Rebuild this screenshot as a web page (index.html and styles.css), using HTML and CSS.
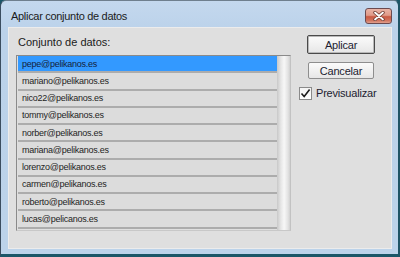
FILE: index.html
```html
<!DOCTYPE html>
<html lang="es">
<head>
  <meta charset="UTF-8">
  <title>Aplicar conjunto de datos</title>
  <link rel="stylesheet" href="styles.css">
</head>
<body>
  <div class="window">
    <!-- Title bar -->
    <div class="titlebar">
      <span class="title">Aplicar conjunto de datos</span>
      <button class="close" aria-label="Cerrar">
        <svg width="12" height="10" viewBox="0 0 12 10">
          <path d="M2 1.5 L10 8.5 M10 1.5 L2 8.5" stroke="#6a3a30" stroke-width="3.4" stroke-linecap="round"/>
          <path d="M2 1.5 L10 8.5 M10 1.5 L2 8.5" stroke="#ffffff" stroke-width="1.8" stroke-linecap="round"/>
        </svg>
      </button>
    </div>

    <!-- Dialog body -->
    <div class="content">
      <div class="left">
        <div class="label">Conjunto de datos:</div>
        <div class="list">
          <div class="rows">
            <div class="row selected">pepe@pelikanos.es</div>
            <div class="row">mariano@pelikanos.es</div>
            <div class="row">nico22@pelikanos.es</div>
            <div class="row">tommy@pelikanos.es</div>
            <div class="row">norber@pelikanos.es</div>
            <div class="row">mariana@pelikanos.es</div>
            <div class="row">lorenzo@pelikanos.es</div>
            <div class="row">carmen@pelikanos.es</div>
            <div class="row">roberto@pelikanos.es</div>
            <div class="row">lucas@pelicanos.es</div>
          </div>
          <div class="scrollbar"></div>
        </div>
      </div>

      <div class="right">
        <button class="btn default">Aplicar</button>
        <button class="btn">Cancelar</button>
        <label class="check">
          <span class="box">
            <svg width="11" height="11" viewBox="0 0 11 11">
              <path d="M1.5 5.5 L4.2 8.6 L9.6 1.6" fill="none" stroke="#1c1c1c" stroke-width="1.6"/>
            </svg>
          </span>
          Previsualizar
        </label>
      </div>
    </div>
  </div>
</body>
</html>
```

FILE: styles.css
```css
/* Basic page */
body {
  margin: 0;
  background: #1b5668;
  font-family: "Liberation Sans", Arial, sans-serif;
}

/* Window frame */
.window {
  width: 400px;
  height: 257px;
  box-sizing: border-box;
  border-style: solid;
  border-width: 1px 2px 3px 1px;
  border-color: #6f7f8e #1f5466 #1b5668 #3b4d5f;
  border-radius: 6px 6px 0 0;
  background: linear-gradient(#c4d8ee, #bbd2ea 30px, #bcd3ea);
  padding: 0 6px 5px 7px;
  display: flex;
  flex-direction: column;
}

/* Title bar */
.titlebar {
  height: 26px;
  flex-shrink: 0;
  display: flex;
  justify-content: space-between;
  align-items: flex-start;
  padding-left: 3px;
}
.title {
  margin-top: 9px;
  font-size: 11px;
  line-height: 13px;
  letter-spacing: -0.3px;
  color: #1b1b1b;
}
.close {
  margin-top: 7px;
  width: 27px;
  height: 16px;
  padding: 0;
  border: 1px solid #6b4a4f;
  border-radius: 3px;
  background: linear-gradient(#eab4a6, #e09a88 45%, #c95a43 55%, #d0705a 80%, #e0a08e);
  display: flex;
  align-items: center;
  justify-content: center;
}

/* Dialog body */
.content {
  flex: 1;
  background: #dfdfdf;
  border: 1px solid #ececec;
  display: flex;
  gap: 8px;
  padding: 7px 16px 0 7px;
}
.left {
  display: flex;
  flex-direction: column;
}
.label {
  margin: 1px 0 6px 2px;
  font-size: 11px;
  line-height: 13px;
  color: #202020;
}

/* List box */
.list {
  width: 275px;
  height: 176px;
  box-sizing: border-box;
  border: 1px solid;
  border-color: #8a8a8a #c2c2c2 #c8c8c8 #8a8a8a;
  display: flex;
}
.rows {
  flex: 1;
  padding-left: 1px;
}
.row {
  height: 17.25px;
  box-sizing: border-box;
  border-bottom: 2px solid #acacac;
  background: #dcdcdc;
  padding-left: 4px;
  display: flex;
  align-items: center;
  font-size: 9px;
  letter-spacing: -0.25px;
  color: #1e1e1e;
}
.row.selected {
  background: #3399ff;
  color: #14223a;
}
.scrollbar {
  width: 13px;
  background: linear-gradient(to right, #c8c8c8, #e6e6e6 30%, #f7f7f7 55%, #e2e2e2 85%, #d0d0d0);
}

/* Right column */
.right {
  width: 76px;
  display: flex;
  flex-direction: column;
}
.btn {
  margin-left: 8px;
  height: 17px;
  padding: 0;
  border: 1px solid #8e8e8e;
  border-radius: 2px;
  background: linear-gradient(#fbfbfb, #f1f1f1 50%, #e6e6e6);
  font-family: "Liberation Sans", Arial, sans-serif;
  font-size: 11px;
  letter-spacing: -0.2px;
  color: #1c1c30;
}
.btn + .btn {
  margin: 8px 1px 0 9px;
}
.btn.default {
  height: 19px;
  border-color: #4a4a4a;
  box-shadow: inset 0 0 0 1px #b8b8b8;
}
.check {
  margin-top: 8px;
  display: flex;
  align-items: center;
  gap: 4px;
  font-size: 11px;
  line-height: 13px;
  letter-spacing: -0.2px;
  color: #1c1c30;
}
.box {
  width: 13px;
  height: 13px;
  box-sizing: border-box;
  border: 1px solid #8a8a8a;
  background: linear-gradient(#f4f4f4, #ffffff);
  display: flex;
  align-items: center;
  justify-content: center;
}
```
